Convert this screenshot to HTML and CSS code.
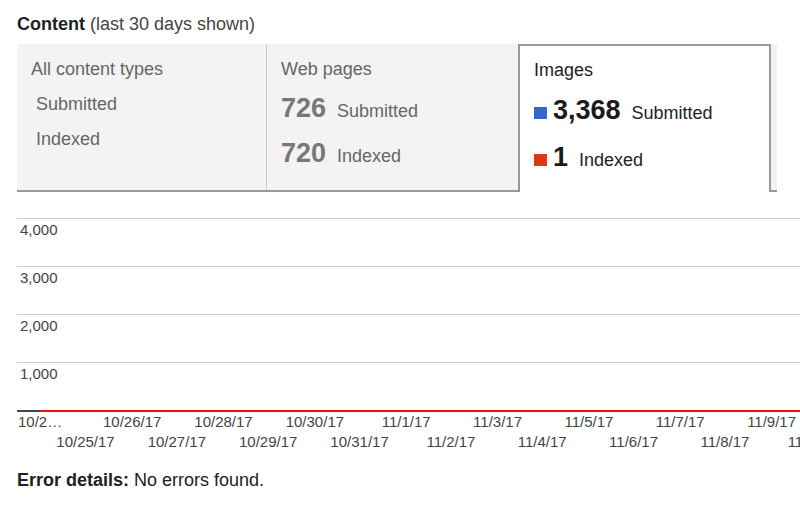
FILE: index.html
```html
<!DOCTYPE html>
<html lang="en">

<head>
    <meta charset="UTF-8">
    <title>Content</title>
    <link rel="stylesheet" href="styles.css">
</head>

<body>
    <h2 class="title"><b>Content</b> (last 30 days shown)</h2>

    <div class="tabs">
        <div class="tab tab-all">
            <div class="tab-name">All content types</div>
            <div class="plain-row first">Submitted</div>
            <div class="plain-row">Indexed</div>
        </div>
        <div class="tab tab-web">
            <div class="tab-name">Web pages</div>
            <div class="count-row first"><span class="num">726</span><span class="label">Submitted</span></div>
            <div class="count-row"><span class="num">720</span><span class="label">Indexed</span></div>
        </div>
        <div class="tab active">
            <div class="tab-name">Images</div>
            <div class="count-row first"><span class="swatch blue"></span><span class="num">3,368</span><span class="label">Submitted</span></div>
            <div class="count-row"><span class="swatch red"></span><span class="num">1</span><span class="label">Indexed</span></div>
        </div>
    </div>

    <div class="chart">
        <div class="grid-row">4,000</div>
        <div class="grid-row">3,000</div>
        <div class="grid-row">2,000</div>
        <div class="grid-row">1,000</div>
        <div class="axis">
            <span class="axis-start"></span>
            <span class="axis-line"></span>
        </div>
        <div class="ticks">
            <span class="tick first">10/2…</span>
            <span class="tick">10/26/17</span>
            <span class="tick">10/28/17</span>
            <span class="tick">10/30/17</span>
            <span class="tick">11/1/17</span>
            <span class="tick">11/3/17</span>
            <span class="tick">11/5/17</span>
            <span class="tick">11/7/17</span>
            <span class="tick">11/9/17</span>
        </div>
        <div class="ticks offset">
            <span class="tick">10/25/17</span>
            <span class="tick">10/27/17</span>
            <span class="tick">10/29/17</span>
            <span class="tick">10/31/17</span>
            <span class="tick">11/2/17</span>
            <span class="tick">11/4/17</span>
            <span class="tick">11/6/17</span>
            <span class="tick">11/8/17</span>
            <span class="tick">11/10/17</span>
        </div>
    </div>

    <p class="errors"><b>Error details:</b> No errors found.</p>
</body>

</html>
```

FILE: styles.css
```css
body {
    font-family: "Liberation Sans", Arial, sans-serif;
    font-size: 18px;
    color: #222;
    margin: 0;
    width: 800px;
    height: 506px;
    overflow: hidden;
    background: #fff;
}

.title {
    font-size: 18px;
    font-weight: normal;
    line-height: 22px;
    color: #444;
    margin: 13px 0 0 17px;
}

.title b {
    color: #222;
}

.tabs {
    display: flex;
    width: 760px;
    margin: 9px 0 0 17px;
    background: #f3f3f3;
    border-bottom: 2px solid #999;
}

.tab {
    box-sizing: border-box;
    height: 146px;
    padding: 14px 0 0 14px;
    color: #666;
}

.tab-all {
    width: 250px;
    border-right: 1px solid #ccc;
}

.tab-web {
    width: 251px;
}

.tab.active {
    width: 253px;
    height: 148px;
    margin-bottom: -2px;
    padding-top: 13px;
    background: #fff;
    border: 2px solid #999;
    border-bottom: none;
    color: #222;
}

.tab-name {
    line-height: 22px;
}

.plain-row {
    line-height: 35px;
    padding-left: 5px;
}

.plain-row.first {
    margin-top: 7px;
}

.count-row {
    height: 45px;
    font-size: 27px;
    line-height: 45px;
    white-space: nowrap;
}

.count-row.first {
    margin-top: 6px;
}

.active .count-row.first {
    margin-top: 7px;
}

.active .count-row + .count-row {
    margin-top: 2px;
}

.num {
    font-weight: bold;
    color: #777;
}

.active .num {
    color: #1a1a1a;
}

.label {
    font-size: 18px;
    line-height: 1;
    margin-left: 11px;
}

.swatch {
    display: inline-block;
    width: 13px;
    height: 12px;
    margin-right: 6px;
}

.swatch.blue {
    background: #3366cc;
}

.swatch.red {
    background: #dc3912;
}

.chart {
    width: 800px;
    margin: 26px 0 0 17px;
}

.grid-row {
    box-sizing: border-box;
    height: 48px;
    border-top: 1px solid #ccc;
    padding: 2px 0 0 3px;
    font-size: 15px;
    line-height: 18px;
    color: #444;
}

.axis {
    display: flex;
    height: 2px;
}

.axis-start {
    width: 23px;
    background: #444;
}

.axis-line {
    flex: 1;
    background: #e31616;
}

.ticks {
    display: flex;
    gap: 45.68px;
    font-size: 15px;
    line-height: 19.5px;
    color: #444;
}

.ticks.offset {
    padding-left: 45.68px;
}

.tick {
    display: flex;
    justify-content: center;
    flex: 0 0 45.68px;
    min-width: 0;
    white-space: nowrap;
}

.tick.first {
    justify-content: flex-start;
    padding-left: 1px;
}

.errors {
    margin: 18px 0 0 17px;
    line-height: 22px;
}
```
